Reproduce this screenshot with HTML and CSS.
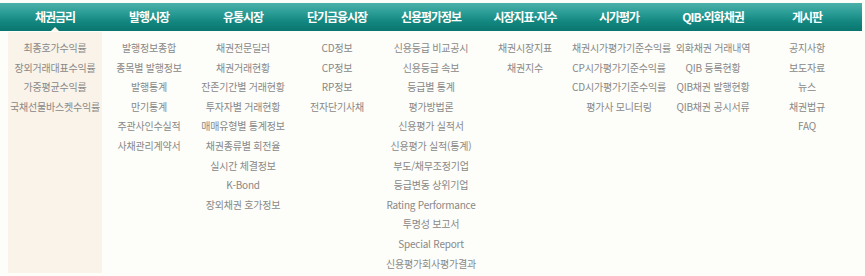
FILE: index.html
```html
<!DOCTYPE html>
<html lang="ko">
<head>
<meta charset="utf-8">
<title>메뉴</title>
<link rel="stylesheet" href="styles.css">
</head>
<body>
<div class="gnb">
  <div class="gnb-head">
    <div class="head-item active">채권금리</div>
    <div class="head-item">발행시장</div>
    <div class="head-item">유통시장</div>
    <div class="head-item">단기금융시장</div>
    <div class="head-item">신용평가정보</div>
    <div class="head-item">시장지표·지수</div>
    <div class="head-item">시가평가</div>
    <div class="head-item">QIB·외화채권</div>
    <div class="head-item">게시판</div>
  </div>
  <div class="gnb-body">
    <ul class="col col-active">
      <li>최종호가수익률</li>
      <li>장외거래대표수익률</li>
      <li>가중평균수익률</li>
      <li>국채선물바스켓수익률</li>
    </ul>
    <ul class="col">
      <li>발행정보종합</li>
      <li>종목별 발행정보</li>
      <li>발행통계</li>
      <li>만기통계</li>
      <li>주관사인수실적</li>
      <li>사채관리계약서</li>
    </ul>
    <ul class="col">
      <li>채권전문딜러</li>
      <li>채권거래현황</li>
      <li>잔존기간별 거래현황</li>
      <li>투자자별 거래현황</li>
      <li>매매유형별 통계정보</li>
      <li>채권종류별 회전율</li>
      <li>실시간 체결정보</li>
      <li>K-Bond</li>
      <li>장외채권 호가정보</li>
    </ul>
    <ul class="col">
      <li>CD정보</li>
      <li>CP정보</li>
      <li>RP정보</li>
      <li>전자단기사채</li>
    </ul>
    <ul class="col">
      <li>신용등급 비교공시</li>
      <li>신용등급 속보</li>
      <li>등급별 통계</li>
      <li>평가방법론</li>
      <li>신용평가 실적서</li>
      <li>신용평가 실적(통계)</li>
      <li>부도/채무조정기업</li>
      <li>등급변동 상위기업</li>
      <li>Rating Performance</li>
      <li>투명성 보고서</li>
      <li>Special Report</li>
      <li>신용평가회사평가결과</li>
    </ul>
    <ul class="col">
      <li>채권시장지표</li>
      <li>채권지수</li>
    </ul>
    <ul class="col">
      <li>채권시가평가기준수익률</li>
      <li>CP시가평가기준수익률</li>
      <li>CD시가평가기준수익률</li>
      <li>평가사 모니터링</li>
    </ul>
    <ul class="col">
      <li>외화채권 거래내역</li>
      <li>QIB 등록현황</li>
      <li>QIB채권 발행현황</li>
      <li>QIB채권 공시서류</li>
    </ul>
    <ul class="col">
      <li>공지사항</li>
      <li>보도자료</li>
      <li>뉴스</li>
      <li>채권법규</li>
      <li>FAQ</li>
    </ul>
  </div>
</div>
</body>
</html>
```

FILE: styles.css
```css
html, body {
  margin: 0;
  padding: 0;
  background: #fdfdf9;
}

.gnb {
  width: 862px;
  padding-top: 3px;
  font-family: "Noto Sans CJK KR", "Liberation Sans", sans-serif;
}

.gnb-head {
  display: grid;
  grid-template-columns: repeat(9, 94px);
  padding: 0 8px;
  height: 28px;
  background: linear-gradient(#4cb1aa 0%, #2a9d96 35%, #138880 65%, #0a756f 100%);
}

.head-item {
  position: relative;
  color: #ffffff;
  font-size: 12px;
  font-weight: bold;
  letter-spacing: -1px;
  line-height: 28px;
  text-align: center;
}

.head-item.active::after {
  content: "";
  position: absolute;
  left: 50%;
  bottom: 0;
  margin-left: -4px;
  border-left: 4px solid transparent;
  border-right: 4px solid transparent;
  border-bottom: 4px solid #faf3e9;
}

.gnb-body {
  display: grid;
  grid-template-columns: repeat(9, 94px);
  padding: 1px 8px 0;
}

.col {
  list-style: none;
  margin: 0;
  padding: 6px 0 0;
}

.col-active {
  background: #faf3e9;
}

.col li {
  height: 19.6px;
  line-height: 19.6px;
  font-size: 10px;
  letter-spacing: -0.2px;
  color: #888888;
  text-align: center;
  white-space: nowrap;
}
```
